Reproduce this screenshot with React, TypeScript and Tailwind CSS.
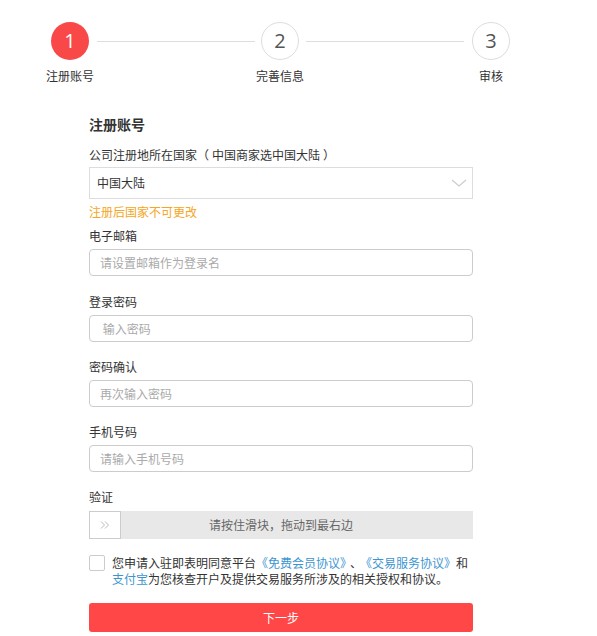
const font = { fontFamily: '"Noto Sans CJK SC", "Noto Sans", sans-serif' };

function Step({ n, label, active }: { n: number; label: string; active?: boolean }) {
  return (
    <div className="flex w-[38px] flex-col items-center">
      <div
        className={
          active
            ? 'flex h-[38px] w-[38px] items-center justify-center rounded-full bg-[#f94848] text-[20px] text-white'
            : 'flex h-[38px] w-[38px] items-center justify-center rounded-full border border-[#dddddd] bg-white text-[20px] text-[#555]'
        }
        style={{ fontFamily: '"Open Sans", "Noto Sans", sans-serif' }}
      >
        {n}
      </div>
      <div className="mt-[8px] whitespace-nowrap text-[12px] leading-4 text-[#333]">{label}</div>
    </div>
  );
}

function Field({ label, placeholder, top }: { label: string; placeholder: string; top: string }) {
  return (
    <>
      <div className={`${top} text-[12px] leading-4 text-[#333]`}>{label}</div>
      <input
        className="mt-[5px] block h-[27px] w-full rounded-[4px] border border-[#cccccc] px-[10px] text-[12px] text-[#333] outline-none placeholder:text-[#aaaaaa]"
        placeholder={placeholder}
        style={font}
      />
    </>
  );
}

export default function App() {
  return (
    <div className="min-h-screen w-[597px] bg-white" style={font}>
      <div className="ml-[51px] flex w-[459px] items-start pt-[22px]">
        <Step n={1} label="注册账号" active />
        <div className="ml-[8px] mr-[6px] mt-[19px] h-px flex-1 bg-[#dddddd]" />
        <Step n={2} label="完善信息" />
        <div className="ml-[7px] mr-[8px] mt-[19px] h-px flex-1 bg-[#dddddd]" />
        <Step n={3} label="审核" />
      </div>

      <div className="ml-[89px] w-[384px]">
        <div className="mt-[30px] text-[14px] font-bold leading-5 text-[#333]">注册账号</div>
        <div className="mt-[13px] text-[12px] leading-4 text-[#333]">
          公司注册地所在国家（<span className="ml-[3px]">中国商家选中国大陆</span>
          <span className="ml-[3px]">）</span>
        </div>
        <div className="mt-[4px] flex h-[32px] items-center justify-between border border-[#dddddd] pl-[7px] pr-[5px] text-[12px] text-[#333]">
          <span>中国大陆</span>
          <svg width="16" height="10" viewBox="0 0 16 10" fill="none">
            <polyline points="1,2 8,8 15,2" stroke="#cccccc" strokeWidth="1.2" />
          </svg>
        </div>
        <div className="mt-[5px] text-[12px] leading-4 text-[#f5a623]">注册后国家不可更改</div>

        <Field label="电子邮箱" placeholder="请设置邮箱作为登录名" top="mt-[8px]" />
        <Field label="登录密码" placeholder=" 输入密码" top="mt-[18px]" />
        <Field label="密码确认" placeholder="再次输入密码" top="mt-[17px]" />
        <Field label="手机号码" placeholder="请输入手机号码" top="mt-[17px]" />

        <div className="mt-[17px] text-[12px] leading-4 text-[#333]">验证</div>
        <div className="mt-[6px] flex h-[28px] items-center bg-[#e8e8e8]">
          <div className="flex h-[28px] w-[32px] items-center justify-center border border-[#cccccc] bg-white">
            <svg width="10" height="8" viewBox="0 0 10 8" fill="none">
              <polyline points="1,0.5 4.5,4 1,7.5" stroke="#bbbbbb" strokeWidth="1" />
              <polyline points="5,0.5 8.5,4 5,7.5" stroke="#bbbbbb" strokeWidth="1" />
            </svg>
          </div>
          <div className="flex-1 pr-[32px] text-center text-[12px] text-[#666]">请按住滑块，拖动到最右边</div>
        </div>

        <div className="mt-[16px] flex items-start gap-[7px]">
          <div className="h-[16px] w-[16px] shrink-0 rounded-[2px] border border-[#cccccc] bg-white" />
          <div className="min-w-0 flex-1 text-[12px] leading-4 text-[#333]">
            <div className="whitespace-nowrap">
              您申请入驻即表明同意平台<span className="text-[#3d95cf]">《免费会员协议》</span>
              <span className="mx-[4px]">、</span>
              <span className="text-[#3d95cf]">《交易服务协议》</span>和
            </div>
            <div>
              <span className="text-[#3d95cf]">支付宝</span>为您核查开户及提供交易服务所涉及的相关授权和协议。
            </div>
          </div>
        </div>

        <button className="mt-[16px] flex h-[29px] w-full items-center justify-center rounded-[3px] bg-[#ff4747] text-[12px] text-white">
          下一步
        </button>
      </div>
    </div>
  );
}
